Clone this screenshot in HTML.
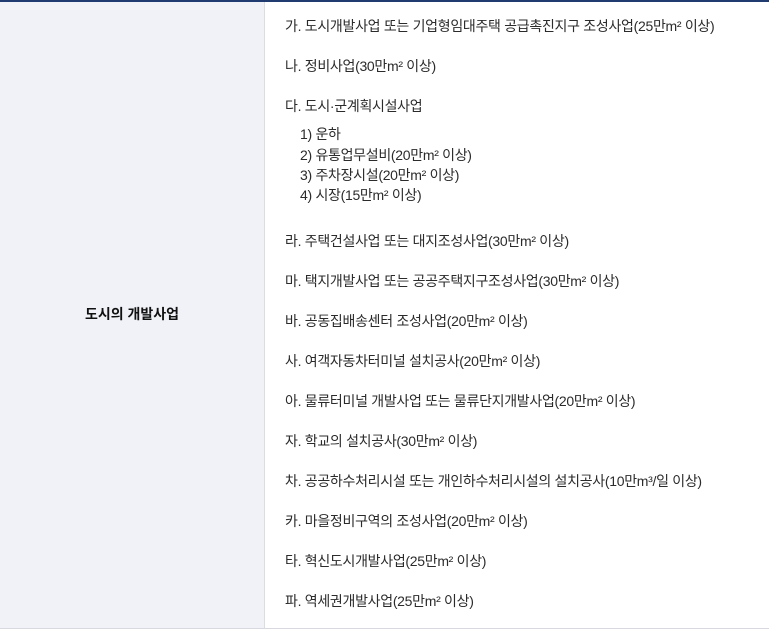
<!DOCTYPE html>
<html><head><meta charset="utf-8"><style>
html,body{margin:0;padding:0;width:769px;height:632px;background:#fff;overflow:hidden}
body{font-family:"Liberation Sans","Noto Sans CJK KR",sans-serif;color:#2b2b2b;font-size:14px;position:relative}
.top{position:absolute;left:0;top:0;width:769px;height:2px;background:#1f3b70}
.left{position:absolute;left:0;top:2px;width:264px;height:626px;background:#f1f2f7;border-right:1px solid #dcdde2}
.bot{position:absolute;left:0;top:628px;width:769px;height:1px;background:#d8d9de}
.lab{position:absolute;left:0;width:264px;top:304px;text-align:center;font-size:14px;color:#111;font-weight:700}
.t{position:absolute;left:285px;white-space:nowrap;line-height:20px;letter-spacing:-0.3px}
.s{left:300px}
</style></head><body>
<div class="top"></div><div class="left"></div><div class="bot"></div>
<div class="lab">도시의 개발사업</div>
<div class="t" style="top:16px">가. 도시개발사업 또는 기업형임대주택 공급촉진지구 조성사업(25만m² 이상)</div>
<div class="t" style="top:56px">나. 정비사업(30만m² 이상)</div>
<div class="t" style="top:96px">다. 도시·군계획시설사업</div>
<div class="t s" style="top:124px">1) 운하</div>
<div class="t s" style="top:145px">2) 유통업무설비(20만m² 이상)</div>
<div class="t s" style="top:165px">3) 주차장시설(20만m² 이상)</div>
<div class="t s" style="top:185px">4) 시장(15만m² 이상)</div>
<div class="t" style="top:231px">라. 주택건설사업 또는 대지조성사업(30만m² 이상)</div>
<div class="t" style="top:271px">마. 택지개발사업 또는 공공주택지구조성사업(30만m² 이상)</div>
<div class="t" style="top:311px">바. 공동집배송센터 조성사업(20만m² 이상)</div>
<div class="t" style="top:351px">사. 여객자동차터미널 설치공사(20만m² 이상)</div>
<div class="t" style="top:391px">아. 물류터미널 개발사업 또는 물류단지개발사업(20만m² 이상)</div>
<div class="t" style="top:431px">자. 학교의 설치공사(30만m² 이상)</div>
<div class="t" style="top:471px">차. 공공하수처리시설 또는 개인하수처리시설의 설치공사(10만m³/일 이상)</div>
<div class="t" style="top:511px">카. 마을정비구역의 조성사업(20만m² 이상)</div>
<div class="t" style="top:551px">타. 혁신도시개발사업(25만m² 이상)</div>
<div class="t" style="top:591px">파. 역세권개발사업(25만m² 이상)</div>
</body></html>
